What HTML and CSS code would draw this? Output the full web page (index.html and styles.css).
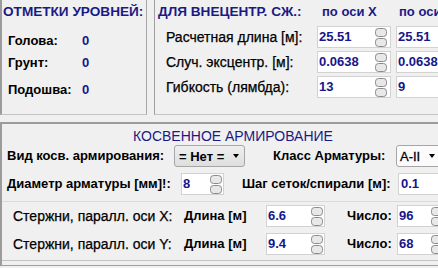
FILE: index.html
```html
<!DOCTYPE html>
<html>
<head>
<meta charset="utf-8">
<link rel="stylesheet" href="styles.css">
</head>
<body>
<div class="screen">
  <div class="top">
    <section class="levels">
      <div class="ttl">ОТМЕТКИ УРОВНЕЙ:</div>
      <div class="lv-row r1"><span class="blbl lv-lbl">Голова:</span><span class="val">0</span></div>
      <div class="lv-row r2"><span class="blbl lv-lbl">Грунт:</span><span class="val">0</span></div>
      <div class="lv-row r3"><span class="blbl lv-lbl">Подошва:</span><span class="val">0</span></div>
    </section>
    <section class="ecc">
      <div class="ecc-grid ecc-head">
        <span class="ttl ecc-ttl">ДЛЯ ВНЕЦЕНТР. СЖ.:</span>
        <span class="axis ax1">по оси X</span>
        <span class="axis ax2">по оси Y</span>
      </div>
      <div class="ecc-grid ecc-row">
        <span class="lbl ecc-lbl">Расчетная длина [м]:</span>
        <div class="field"><span class="val">25.51</span><svg class="spin" width="12" height="19" viewBox="0 0 12 19"><rect x="0.5" y="0.5" width="11" height="8" rx="3" fill="#e8e8e8" stroke="#8a8a8a"/><rect x="0.5" y="10.5" width="11" height="8" rx="3" fill="#e8e8e8" stroke="#8a8a8a"/></svg></div>
        <div class="field"><span class="val">25.51</span><svg class="spin" width="12" height="19" viewBox="0 0 12 19"><rect x="0.5" y="0.5" width="11" height="8" rx="3" fill="#e8e8e8" stroke="#8a8a8a"/><rect x="0.5" y="10.5" width="11" height="8" rx="3" fill="#e8e8e8" stroke="#8a8a8a"/></svg></div>
      </div>
      <div class="ecc-grid ecc-row">
        <span class="lbl ecc-lbl">Случ. эксцентр. [м]:</span>
        <div class="field"><span class="val">0.0638</span><svg class="spin" width="12" height="19" viewBox="0 0 12 19"><rect x="0.5" y="0.5" width="11" height="8" rx="3" fill="#e8e8e8" stroke="#8a8a8a"/><rect x="0.5" y="10.5" width="11" height="8" rx="3" fill="#e8e8e8" stroke="#8a8a8a"/></svg></div>
        <div class="field"><span class="val">0.0638</span><svg class="spin" width="12" height="19" viewBox="0 0 12 19"><rect x="0.5" y="0.5" width="11" height="8" rx="3" fill="#e8e8e8" stroke="#8a8a8a"/><rect x="0.5" y="10.5" width="11" height="8" rx="3" fill="#e8e8e8" stroke="#8a8a8a"/></svg></div>
      </div>
      <div class="ecc-grid ecc-row last">
        <span class="lbl ecc-lbl">Гибкость (лямбда):</span>
        <div class="field"><span class="val">13</span><svg class="spin" width="12" height="19" viewBox="0 0 12 19"><rect x="0.5" y="0.5" width="11" height="8" rx="3" fill="#e8e8e8" stroke="#8a8a8a"/><rect x="0.5" y="10.5" width="11" height="8" rx="3" fill="#e8e8e8" stroke="#8a8a8a"/></svg></div>
        <div class="field"><span class="val">9</span><svg class="spin" width="12" height="19" viewBox="0 0 12 19"><rect x="0.5" y="0.5" width="11" height="8" rx="3" fill="#e8e8e8" stroke="#8a8a8a"/><rect x="0.5" y="10.5" width="11" height="8" rx="3" fill="#e8e8e8" stroke="#8a8a8a"/></svg></div>
      </div>
    </section>
  </div>

  <section class="indirect">
    <div class="ind-ttl">КОСВЕННОЕ АРМИРОВАНИЕ</div>
    <div class="ind-row rowA">
      <span class="blbl w-kind">Вид косв. армирования:</span>
      <div class="select sel-kind"><span class="sel-txt">= Нет =</span><span class="arrow"></span></div>
      <span class="blbl w-class">Класс Арматуры:</span>
      <div class="select sel-class"><span class="sel-txt">A-II</span><span class="arrow"></span></div>
    </div>
    <div class="ind-row rowB">
      <span class="blbl w-diam">Диаметр арматуры [мм]!:</span>
      <div class="field f-diam"><span class="val">8</span><svg class="spin" width="12" height="19" viewBox="0 0 12 19"><rect x="0.5" y="0.5" width="11" height="8" rx="3" fill="#e8e8e8" stroke="#8a8a8a"/><rect x="0.5" y="10.5" width="11" height="8" rx="3" fill="#e8e8e8" stroke="#8a8a8a"/></svg></div>
      <span class="blbl w-step">Шаг сеток/спирали [м]:</span>
      <div class="field f-step"><span class="val">0.1</span></div>
    </div>
    <div class="rods">
      <div class="rod-row">
        <span class="lbl w-rod">Стержни, паралл. оси X:</span>
        <span class="blbl w-len">Длина [м]</span>
        <div class="field f-len"><span class="val">6.6</span><svg class="spin" width="12" height="19" viewBox="0 0 12 19"><rect x="0.5" y="0.5" width="11" height="8" rx="3" fill="#e8e8e8" stroke="#8a8a8a"/><rect x="0.5" y="10.5" width="11" height="8" rx="3" fill="#e8e8e8" stroke="#8a8a8a"/></svg></div>
        <span class="blbl w-num">Число:</span>
        <div class="field f-num"><span class="val">96</span><svg class="spin" width="12" height="19" viewBox="0 0 12 19"><rect x="0.5" y="0.5" width="11" height="8" rx="3" fill="#e8e8e8" stroke="#8a8a8a"/><rect x="0.5" y="10.5" width="11" height="8" rx="3" fill="#e8e8e8" stroke="#8a8a8a"/></svg></div>
      </div>
      <div class="rod-row">
        <span class="lbl w-rod">Стержни, паралл. оси Y:</span>
        <span class="blbl w-len">Длина [м]</span>
        <div class="field f-len"><span class="val">9.4</span><svg class="spin" width="12" height="19" viewBox="0 0 12 19"><rect x="0.5" y="0.5" width="11" height="8" rx="3" fill="#e8e8e8" stroke="#8a8a8a"/><rect x="0.5" y="10.5" width="11" height="8" rx="3" fill="#e8e8e8" stroke="#8a8a8a"/></svg></div>
        <span class="blbl w-num">Число:</span>
        <div class="field f-num"><span class="val">68</span><svg class="spin" width="12" height="19" viewBox="0 0 12 19"><rect x="0.5" y="0.5" width="11" height="8" rx="3" fill="#e8e8e8" stroke="#8a8a8a"/><rect x="0.5" y="10.5" width="11" height="8" rx="3" fill="#e8e8e8" stroke="#8a8a8a"/></svg></div>
      </div>
    </div>
  </section>
</div>
</body>
</html>
```

FILE: styles.css
```css
* { box-sizing: border-box; }
html, body { margin: 0; padding: 0; }
body {
  background: #f0f0f0;
  font-family: "Liberation Sans", Arial, sans-serif;
  font-size: 14px;
  color: #000;
}
.screen {
  width: 438px;
  height: 268px;
  overflow: hidden;
  background: #f0f0f0;
}
.top {
  display: flex;
  height: 115px;
}
.levels {
  flex: 0 0 147px;
  border-left: 2px solid #9c9c9c;
  border-right: 1px solid #a8a8a8;
  border-bottom: 1px solid #c4c4c4;
}
.ttl {
  font-weight: bold;
  font-size: 13.6px;
  color: #1a1a86;
  line-height: 16px;
  padding-top: 4px;
  white-space: nowrap;
}
.levels .ttl { padding-left: 1px; }
.lbl {
  font-size: 14px;
  line-height: 16px;
  white-space: nowrap;
  -webkit-text-stroke: 0.25px #000;
}
.blbl {
  font-size: 13px;
  font-weight: bold;
  line-height: 16px;
  white-space: nowrap;
}
.val {
  font-size: 13px;
  font-weight: bold;
  color: #16168a;
  line-height: 16px;
  white-space: nowrap;
}
.lv-row {
  display: flex;
  align-items: center;
  height: 16px;
  padding-left: 6px;
}
.lv-lbl { width: 74px; flex-shrink: 0; }
.r1 { margin-top: 13px; }
.r2 { margin-top: 6px; }
.r3 { margin-top: 11px; }

.ecc {
  flex: 1 1 auto;
  margin-left: 7px;
  border-left: 1px solid #a0a0a0;
  border-bottom: 1px solid #c4c4c4;
  min-width: 0;
  overflow: hidden;
}
.ecc-grid {
  display: grid;
  grid-template-columns: 157px 74px 74px;
  column-gap: 5px;
}
.ecc-head {
  height: 26px;
  padding-top: 4px;
}
.ecc-ttl { padding-left: 3px; padding-top: 0; }
.axis {
  font-size: 13px;
  font-weight: bold;
  color: #1a1a86;
  line-height: 16px;
  white-space: nowrap;
}
.ax1 { padding-left: 5px; }
.ax2 { padding-left: 3px; }
.ecc-row {
  height: 22px;
  align-items: center;
  margin-bottom: 3px;
}
.ecc-row.last { margin-top: 1px; }
.ecc-lbl { padding-left: 11px; }

.field {
  height: 22px;
  background: #fff;
  border: 1px solid #d2d2d2;
  display: flex;
  align-items: center;
  justify-content: space-between;
  padding-left: 1px;
  padding-right: 3px;
  overflow: hidden;
  flex-shrink: 0;
}
.spin { flex: 0 0 auto; display: block; }

.indirect {
  margin-top: 7px;
  border-top: 2px solid #9c9c9c;
  border-left: 2px solid #9c9c9c;
  border-bottom: 1px solid #a0a0a0;
  height: 144px;
  padding-bottom: 3px;
  overflow: hidden;
}
.ind-ttl {
  padding-top: 4px;
  padding-left: 131px;
  line-height: 16px;
  color: #1a1a86;
  white-space: nowrap;
}
.ind-row {
  display: flex;
  align-items: center;
  height: 22px;
}
.ind-row > *, .rod-row > * { flex-shrink: 0; }
.rowA { margin-top: 1px; }
.rowB { margin-top: 6px; }
.w-kind { width: 172px; padding-left: 5px; }
.w-class { width: 151px; padding-left: 28px; }
.w-diam { width: 179px; padding-left: 5px; }
.w-step { width: 174px; padding-left: 18px; }
.select {
  height: 22px;
  display: flex;
  align-items: center;
  border: 1px solid #a6a6a6;
  border-radius: 3px;
  font-size: 13px;
  font-weight: bold;
  white-space: nowrap;
}
.sel-kind {
  width: 71px;
  background: linear-gradient(#efefef, #dedede);
  padding-left: 4px;
  justify-content: space-between;
  padding-right: 5px;
}
.sel-class {
  width: 60px;
  background: #fbfbfb;
  padding-left: 3px;
  justify-content: space-between;
  padding-right: 0;
  font-weight: normal;
  -webkit-text-stroke: 0.3px #000;
}
.arrow {
  width: 0;
  height: 0;
  border-left: 3.5px solid transparent;
  border-right: 3.5px solid transparent;
  border-top: 4px solid #000;
}
.sel-class .arrow { margin-right: 20px; }
.f-diam { width: 43px; padding-right: 1px; }
.f-step { width: 60px; padding-left: 2px; }

.rods {
  margin-top: 6px;
  border-top: 1px solid #dadada;
  border-bottom: 1px solid #c4c4c4;
  padding-top: 3px;
  padding-bottom: 5px;
}
.rod-row {
  display: flex;
  align-items: center;
  height: 22px;
}
.rod-row + .rod-row { margin-top: 6px; }
.w-rod { width: 182px; padding-left: 11px; }
.w-len { width: 82px; }
.f-len { width: 59px; padding-right: 1px; }
.w-num { width: 72px; padding-left: 22px; }
.f-num { width: 50px; padding-right: 3px; }
```
